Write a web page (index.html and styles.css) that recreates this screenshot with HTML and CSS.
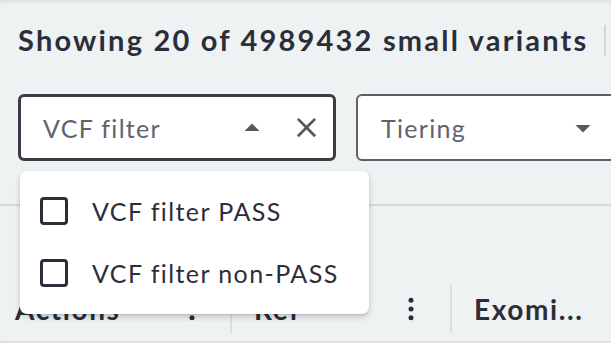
FILE: index.html
```html
<!DOCTYPE html>
<html lang="en">
<head>
    <meta charset="UTF-8">
    <meta name="viewport" content="width=device-width, initial-scale=1.0">
    <title>Small variants</title>
    <link rel="stylesheet" href="styles.css">
</head>
<body>
    <div class="page">
        <div class="summary">
            <h2>Showing 20 of 4989432 small variants</h2>
            <span class="summary-divider"></span>
        </div>

        <div class="filters">
            <div class="select open">
                <span class="select-label">VCF filter</span>
                <span class="select-icons">
                    <svg class="icon" viewBox="0 0 24 24"><path d="M7 14l5-5 5 5z"/></svg>
                    <svg class="icon close" viewBox="0 0 24 24"><path d="M19 6.41L17.59 5 12 10.59 6.41 5 5 6.41 10.59 12 5 17.59 6.41 19 12 13.41 17.59 19 19 17.59 13.41 12z"/></svg>
                </span>

                <ul class="menu">
                    <li class="menu-item"><span class="checkbox"></span>VCF filter PASS</li>
                    <li class="menu-item"><span class="checkbox"></span>VCF filter non-PASS</li>
                </ul>
            </div>
            <div class="select plain">
                <span class="select-label">Tiering</span>
                <span class="select-icons">
                    <svg class="icon" viewBox="0 0 24 24"><path d="M7 10l5 5 5-5z"/></svg>
                </span>
            </div>
        </div>

        <div class="table">
            <div class="toolbar"></div>
            <div class="table-head">
                <div class="th first">
                    <span>Actions</span>
                    <svg class="kebab" viewBox="0 0 24 24"><circle cx="12" cy="5" r="2"/><circle cx="12" cy="12" r="2"/><circle cx="12" cy="19" r="2"/></svg>
                </div>
                <span class="col-divider"></span>
                <div class="th">
                    <span>Ref</span>
                    <svg class="kebab" viewBox="0 0 24 24"><circle cx="12" cy="5" r="2"/><circle cx="12" cy="12" r="2"/><circle cx="12" cy="19" r="2"/></svg>
                </div>
                <span class="col-divider"></span>
                <div class="th last">
                    <span>Exomi...</span>
                </div>
            </div>
        </div>
    </div>
</body>
</html>
```

FILE: styles.css
```css
* {
    margin: 0;
    padding: 0;
    box-sizing: border-box;
    font-family: 'Lato', 'Noto Sans', sans-serif;
}

body {
    background: #fff;
    color: #2b2e3a;
    overflow: hidden;
}

.page {
    background: #eff2f3;
    box-shadow: inset 0 4px 4px -3px rgba(0, 0, 0, 0.12);
    padding-top: 20px;
}

.summary {
    display: flex;
    align-items: center;
    gap: 16px;
    padding-left: 18px;
    white-space: nowrap;
}

.summary h2 {
    font-size: 29px;
    font-weight: 700;
    line-height: 40px;
    letter-spacing: 2.2px;
}

.summary-divider {
    width: 2px;
    height: 31px;
    background: #d3d7da;
    flex-shrink: 0;
}

.filters {
    display: flex;
    gap: 20px;
    padding-left: 18px;
    margin-top: 34px;
    white-space: nowrap;
}

.select {
    position: relative;
    display: flex;
    align-items: center;
    justify-content: space-between;
    width: 318px;
    height: 67px;
    flex-shrink: 0;
    background: #fff;
    border: 2px solid #5d6068;
    border-radius: 6px;
    padding: 0 10px 0 23px;
}

.select.open {
    border: 3px solid #3a3d45;
    padding-left: 22px;
}

.select.plain {
    padding-right: 71px;
}

.select-label {
    font-size: 25px;
    letter-spacing: 1.3px;
    color: #5f636b;
}

.select-icons {
    display: flex;
    align-items: center;
    gap: 20px;
}

.icon {
    width: 36px;
    height: 36px;
    fill: #555961;
}

.icon.close {
    width: 33px;
    height: 33px;
}

.menu {
    position: absolute;
    top: 74px;
    left: -1px;
    width: 349px;
    list-style: none;
    background: #fff;
    border-radius: 7px;
    box-shadow: 0 3px 6px rgba(0, 0, 0, 0.18), 0 1px 2px rgba(0, 0, 0, 0.1);
    padding: 9px 0 10px;
    z-index: 5;
}

.menu-item {
    display: flex;
    align-items: center;
    gap: 24px;
    height: 62px;
    padding-left: 20px;
    font-size: 25px;
    letter-spacing: 1.4px;
    color: #2b2e3a;
}

.checkbox {
    width: 28px;
    height: 28px;
    border: 3px solid #2b2e3a;
    border-radius: 4px;
}

.table {
    margin-top: 43px;
    border-top: 2px solid #d6d9dc;
}

.toolbar {
    height: 75px;
}

.table-head {
    display: flex;
    align-items: flex-start;
    height: 62px;
    padding-top: 4px;
    border-bottom: 2px solid #dde0e2;
    white-space: nowrap;
}

.th {
    display: flex;
    align-items: center;
    justify-content: space-between;
    height: 48px;
    width: 218px;
    padding: 0 24px 0 22px;
    font-size: 28px;
    font-weight: 700;
    letter-spacing: 1.6px;
}

.th.first {
    width: 230px;
    padding-left: 15px;
    padding-right: 23px;
}

.th.last {
    width: auto;
}

.kebab {
    width: 30px;
    height: 30px;
    fill: #2b2e3a;
}

.col-divider {
    width: 2px;
    height: 48px;
    background: #dcdfe2;
    flex-shrink: 0;
}
```
